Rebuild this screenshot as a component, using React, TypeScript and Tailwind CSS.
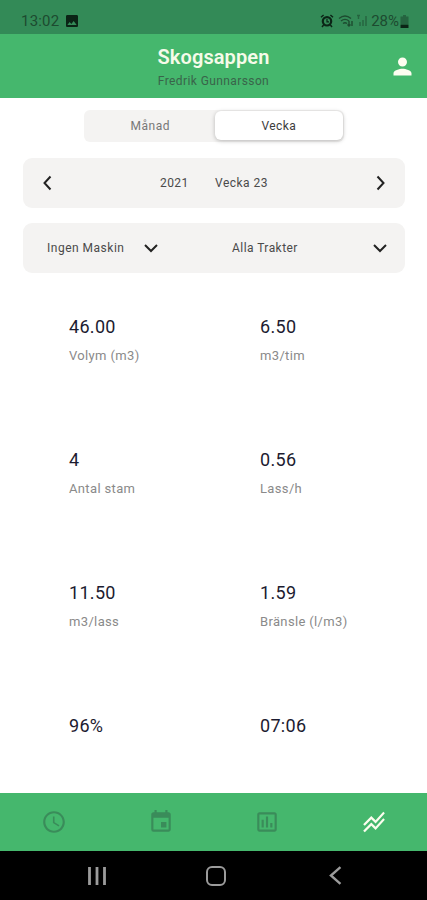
import { ReactNode, useState } from 'react';
import {
  MdEvent,
  MdImage,
  MdOutlineInsertChart,
  MdPerson,
  MdSchedule,
  MdStackedLineChart,
} from 'react-icons/md';

type Stat = { value: string; label?: string };

const stats: Stat[] = [
  { value: '46.00', label: 'Volym (m3)' },
  { value: '6.50', label: 'm3/tim' },
  { value: '4', label: 'Antal stam' },
  { value: '0.56', label: 'Lass/h' },
  { value: '11.50', label: 'm3/lass' },
  { value: '1.59', label: 'Bränsle (l/m3)' },
  { value: '96%' },
  { value: '07:06' },
];

function Chevron({ d, className }: { d: string; className: string }) {
  return (
    <svg
      viewBox="0 0 16 16"
      className={className}
      fill="none"
      stroke="currentColor"
      strokeWidth="2"
    >
      <path d={d} />
    </svg>
  );
}

function StatusBar() {
  return (
    <div className="flex h-[34px] items-end justify-between bg-[#338a57] pr-[18px] pb-[4px] pl-[21px] text-[#1d4b30]">
      <div className="flex items-center gap-[5px]">
        <span className="text-[15px] leading-[18px] tracking-[0.2px]">
          13:02
        </span>
        <MdImage className="size-[16px] text-[#0b2416]" />
      </div>
      <div className="flex items-center">
        <svg
          viewBox="0 0 14 14"
          className="size-[14px] text-[#0b2416]"
          fill="none"
          stroke="currentColor"
          strokeWidth="2.2"
        >
          <circle cx="7" cy="7.3" r="4.2" />
          <path d="M7 5v2.8h2" strokeWidth="1.2" />
          <path d="M1 3.2L3.6 1M13 3.2L10.4 1M3.6 11l-1.6 2M10.4 11l1.6 2" strokeWidth="1.5" />
        </svg>
        <svg
          viewBox="0 0 16 14"
          className="ml-[4px] h-[14px] w-[16px]"
          fill="none"
          stroke="currentColor"
          strokeWidth="1.4"
        >
          <path d="M1 4.5Q7 -0.5 13 4.5M3 7Q7 3.8 11 7M5 9.5Q7 8 9 9.5" />
          <path d="M11 7v5M9.5 10.5l1.5 1.5 1.5-1.5M14 12V7" />
        </svg>
        <svg
          viewBox="0 0 14 14"
          className="ml-[1px] h-[14px] w-[14px] opacity-60"
          fill="none"
          stroke="currentColor"
          strokeWidth="1.4"
        >
          <path d="M2 1.5h3M3.5 1v4M5 12V8M8 12V6M11 12V2" />
        </svg>
        <span className="ml-[2px] text-[15px] leading-[18px]">28%</span>
        <svg viewBox="0 0 9 13" className="ml-[1px] h-[13px] w-[9px]">
          <path d="M3 0h3v1.5h2.5V9h-8V1.5H3z" fill="currentColor" opacity=".6" />
          <path d="M.5 9.5h8V13h-8z" fill="#0b2416" />
        </svg>
      </div>
    </div>
  );
}

function Header() {
  return (
    <header className="grid h-[64px] grid-cols-[48px_1fr_48px] items-center bg-[#45b76d]">
      <div />
      <div className="flex flex-col items-center pt-[1px]">
        <h1 className="text-[20px] leading-[26px] font-semibold tracking-[0.1px] text-[#f6fbe9]">
          Skogsappen
        </h1>
        <p className="pt-[2px] text-[12px] leading-[18px] tracking-[0.4px] text-[#39644a]">
          Fredrik Gunnarsson
        </p>
      </div>
      <button className="flex justify-center pr-[1px] text-[#fdfdf0]">
        <MdPerson className="size-[27px]" />
      </button>
    </header>
  );
}

function Panel({ children }: { children: ReactNode }) {
  return (
    <div className="mr-[22px] ml-[23px] flex h-[50px] items-center rounded-[9px] bg-[#f4f3f2] text-[12px] text-[#4a4a4a]">
      {children}
    </div>
  );
}

export default function App() {
  const [period, setPeriod] = useState('Vecka');

  const tabs = [
    { name: 'time', Icon: MdSchedule },
    { name: 'calendar', Icon: MdEvent },
    { name: 'report', Icon: MdOutlineInsertChart },
    { name: 'trend', Icon: MdStackedLineChart },
  ];

  return (
    <div className="flex h-[900px] w-full flex-col bg-white font-[Roboto,sans-serif]">
      <StatusBar />
      <Header />
      <main className="flex flex-1 flex-col overflow-hidden">
        <div className="mt-[12px] ml-[84px] flex h-[32px] w-[260px] shrink-0 rounded-[6px] bg-[#f4f3f2]">
          {['Månad', 'Vecka'].map((name) => (
            <button
              key={name}
              onClick={() => setPeriod(name)}
              className={
                period === name
                  ? 'mt-[1px] mb-[2px] mr-[1px] flex-1 rounded-[6px] bg-white text-[12px] tracking-[0.4px] text-[#3c3c3c] shadow-[0_1px_4px_rgba(0,0,0,0.25)]'
                  : 'flex-1 pl-[2px] text-[12px] tracking-[0.5px] text-[#777]'
              }
            >
              {name}
            </button>
          ))}
        </div>

        <div className="mt-[16px] flex flex-col gap-[15px]">
          <Panel>
            <Chevron d="M10.5 1.5L4.5 8l6 6.5" className="ml-[17px] size-[16px] text-[#222]" />
            <span className="ml-[104px] w-[55px] tracking-[0.4px]">2021</span>
            <span className="flex-1 tracking-[0.5px]">Vecka 23</span>
            <Chevron d="M5.5 1.5l6 6.5-6 6.5" className="mr-[17px] size-[16px] text-[#222]" />
          </Panel>
          <Panel>
            <span className="ml-[24px] w-[96px] tracking-[0.5px]">
              Ingen Maskin
            </span>
            <Chevron d="M2 5l6 6 6-6" className="size-[16px] text-[#222]" />
            <span className="ml-[73px] flex-1 tracking-[0.45px]">
              Alla Trakter
            </span>
            <Chevron d="M2 5l6 6 6-6" className="mr-[17px] size-[16px] text-[#222]" />
          </Panel>
        </div>

        <div className="mt-[42px] ml-[69px] grid grid-cols-[191px_1fr] auto-rows-[133px]">
          {stats.map((stat) => (
            <div key={stat.value}>
              <p className="text-[18px] leading-[24px] tracking-[0.3px] text-[#1c1b30]">
                {stat.value}
              </p>
              {stat.label && (
                <p className="pt-[8px] text-[13px] leading-[18px] tracking-[0.35px] text-[#8a8a8a]">
                  {stat.label}
                </p>
              )}
            </div>
          ))}
        </div>
      </main>

      <nav className="grid h-[58px] shrink-0 grid-cols-4 items-center bg-[#45b76d] pl-[1px]">
        {tabs.map(({ name, Icon }) => (
          <button
            key={name}
            aria-label={name}
            className={
              name === 'trend'
                ? 'flex justify-center text-[#fbfdee]'
                : 'flex justify-center text-[#3a8c5a]'
            }
          >
            <Icon className="size-[26px]" />
          </button>
        ))}
      </nav>

      <div className="flex h-[49px] shrink-0 items-center bg-black pl-[88px] text-[#9b9b9b]">
        <svg
          viewBox="0 0 18 18"
          className="size-[18px]"
          stroke="currentColor"
          strokeWidth="2.8"
        >
          <path d="M1.5 0v18M9 0v18M16.5 0v18" />
        </svg>
        <div className="ml-[100px] h-[20px] w-[20px] rounded-[6px] border-[2.5px] border-current" />
        <Chevron d="M13 1L5 8l8 7" className="ml-[99px] size-[19px]" />
      </div>
    </div>
  );
}
